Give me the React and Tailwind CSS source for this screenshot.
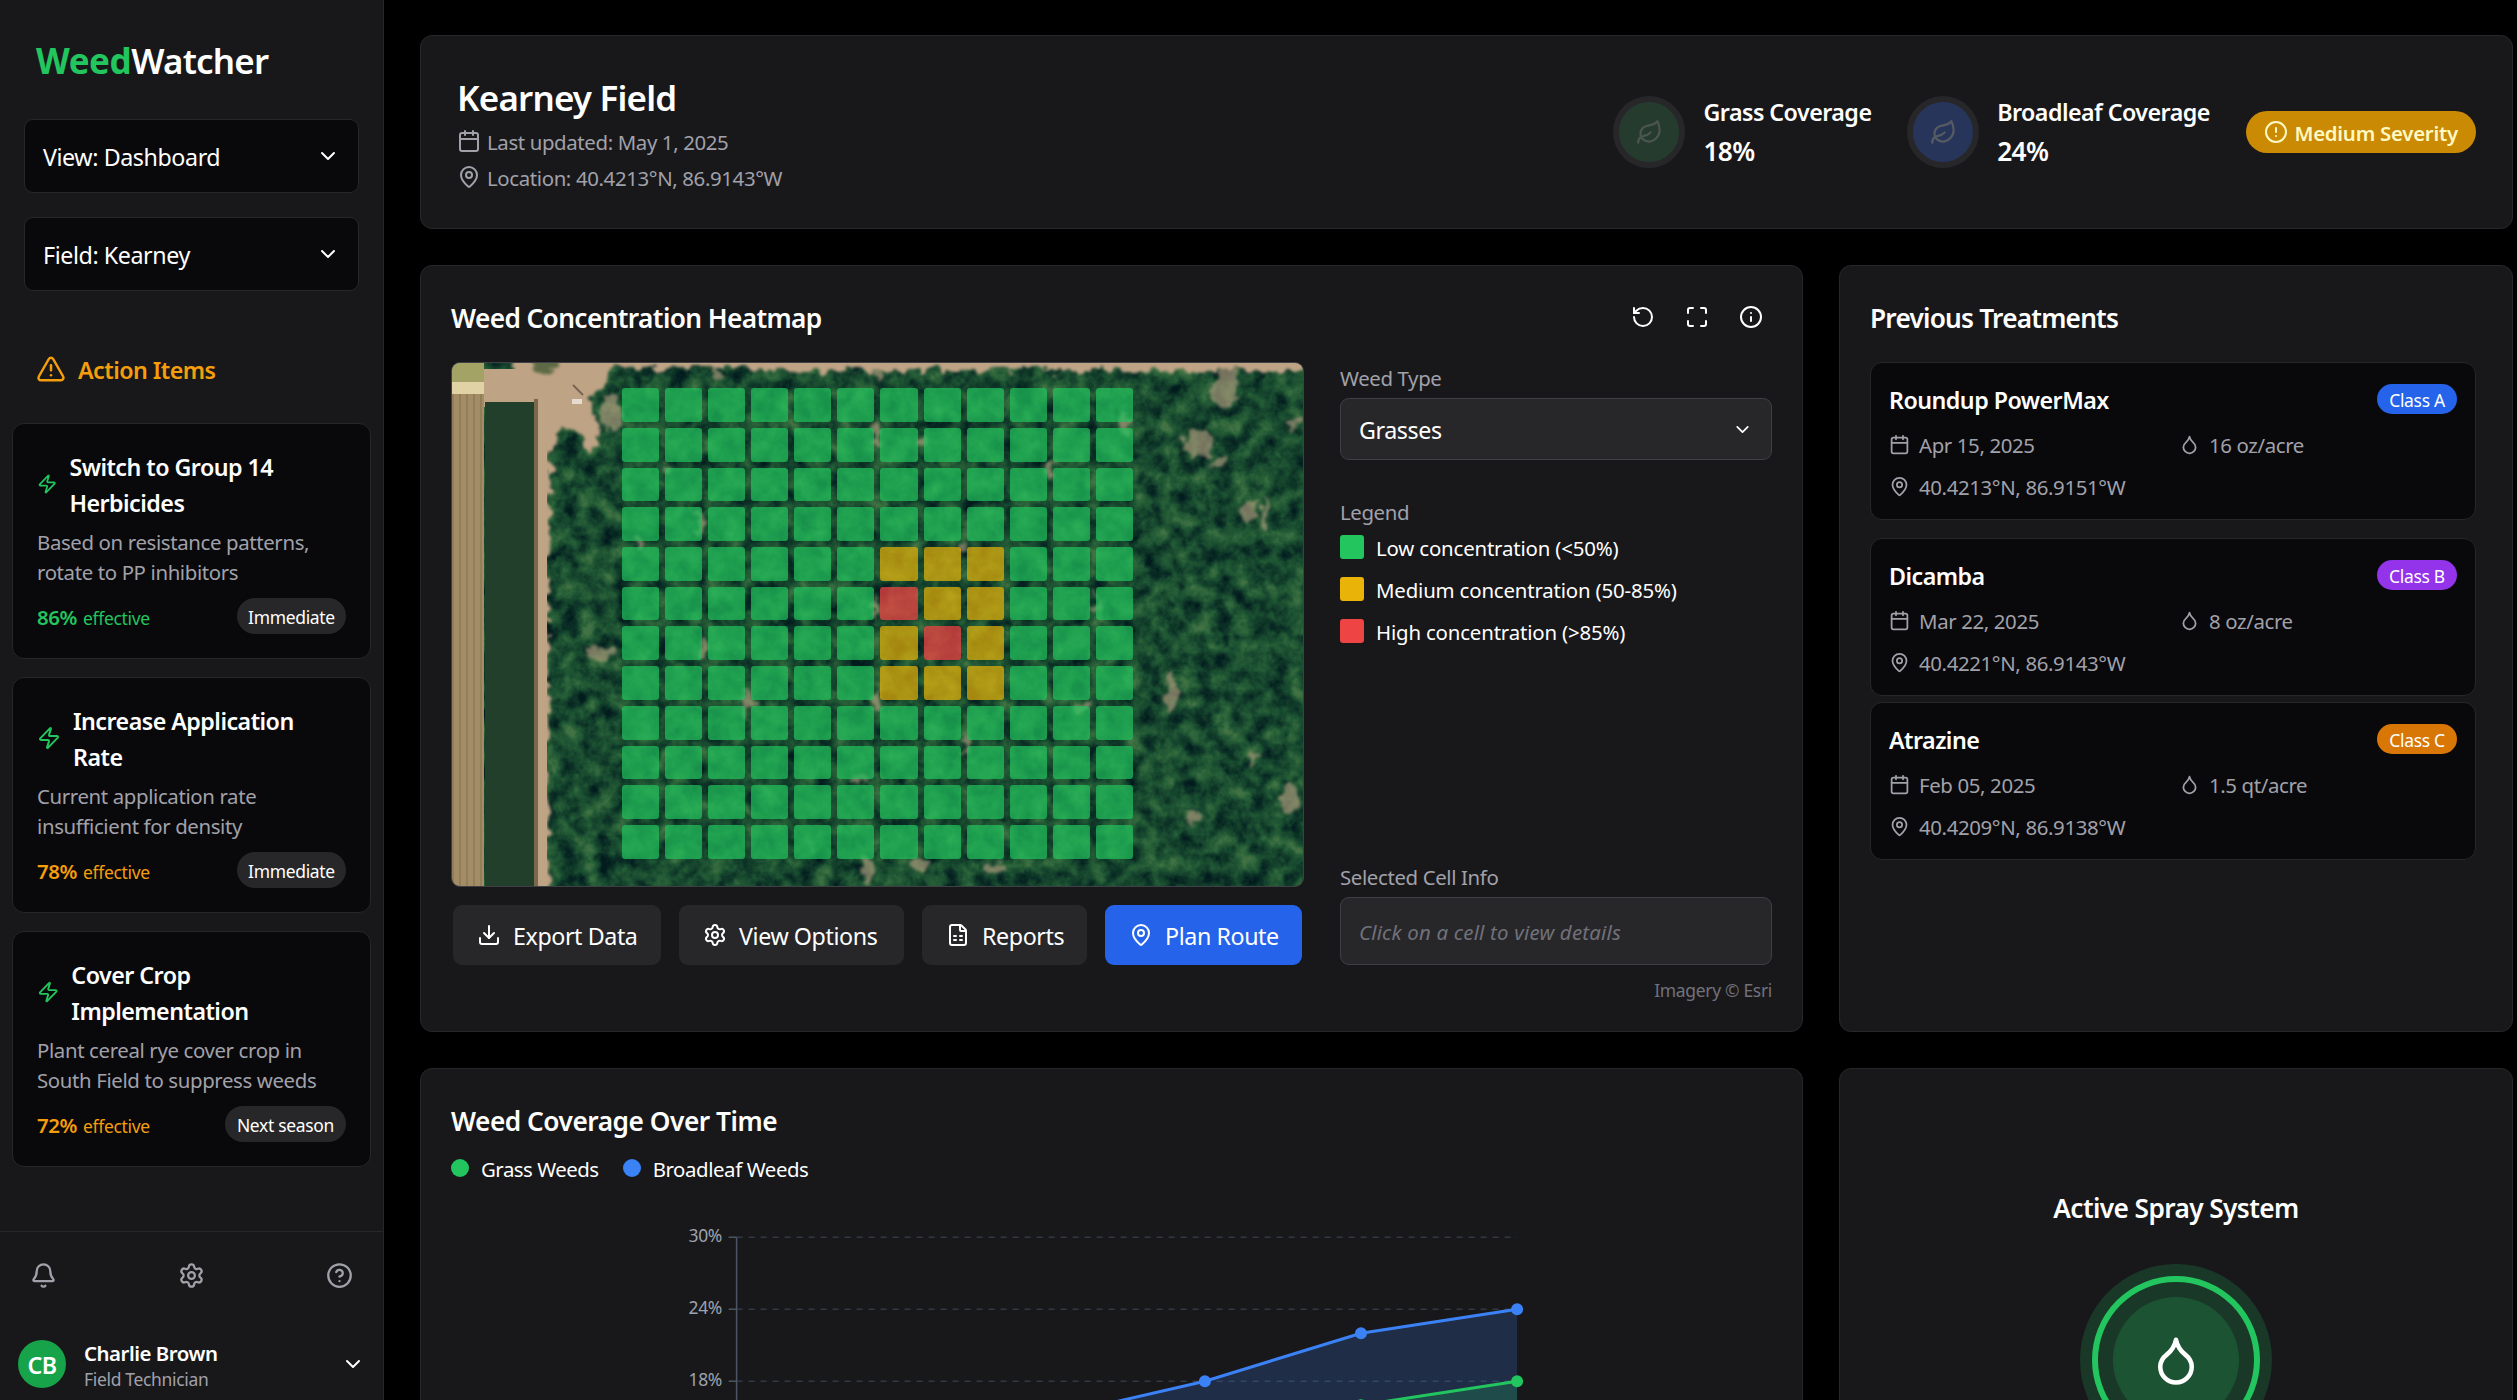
import React from "react";
import {
  Bell,
  Calendar,
  ChevronDown,
  CircleAlert,
  CircleHelp,
  Download,
  Droplet,
  FileSpreadsheet,
  Info,
  Leaf,
  MapPin,
  Maximize,
  RotateCcw,
  Settings,
  TriangleAlert,
  Zap,
} from "lucide-react";

const actionItems = [
  { title: ["Switch to Group 14", "Herbicides"], text: ["Based on resistance patterns,", "rotate to PP inhibitors"], pct: "86%", tone: "text-[#22c55e]", tag: "Immediate", tagWidth: "w-[72.7px]", icon: "w-[13.6px]" },
  { title: ["Increase Application", "Rate"], text: ["Current application rate", "insufficient for density"], pct: "78%", tone: "text-[#f59e0b]", tag: "Immediate", tagWidth: "w-[72.7px]", icon: "w-[16px]" },
  { title: ["Cover Crop", "Implementation"], text: ["Plant cereal rye cover crop in", "South Field to suppress weeds"], pct: "72%", tone: "text-[#f59e0b]", tag: "Next season", tagWidth: "w-[80.7px]", icon: "w-[14.9px]" },
];

const treatments = [
  { name: "Roundup PowerMax", cls: "Class A", color: "bg-[#2563eb]", date: "Apr 15, 2025", rate: "16 oz/acre", place: "40.4213°N, 86.9151°W", gap: "" },
  { name: "Dicamba", cls: "Class B", color: "bg-[#9333ea]", date: "Mar 22, 2025", rate: "8 oz/acre", place: "40.4221°N, 86.9143°W", gap: "mt-3" },
  { name: "Atrazine", cls: "Class C", color: "bg-[#d97706]", date: "Feb 05, 2025", rate: "1.5 qt/acre", place: "40.4209°N, 86.9138°W", gap: "mt-1" },
];

const legend = [
  ["bg-[#22c55e]", "Low concentration (<50%)"],
  ["bg-[#eab308]", "Medium concentration (50-85%)"],
  ["bg-[#ef4444]", "High concentration (>85%)"],
];

const heat = [
  "............",
  "............",
  "............",
  "............",
  "......mmm...",
  "......hmm...",
  "......mhm...",
  "......mmm...",
  "............",
  "............",
  "............",
  "............",
];

const cellColor = { ".": "bg-[#22c55e]/70", m: "bg-[#eab308]/70", h: "bg-[#ef4444]/75" };

// Text run, nudged down slightly so that capitals sit centred beside icons.
function T({ children, className = "", shift = "translate-y-[0.4px]" }) {
  return <span className={`inline-block ${shift} ${className}`}>{children}</span>;
}

function Select({ label }) {
  return (
    <div className="flex items-center justify-between rounded-md border border-[#27272a] bg-[#09090b] px-3 py-3 text-base">
      <T>{label}</T>
      <ChevronDown size={16} />
    </div>
  );
}

function ActionCard({ item }) {
  return (
    <div className="rounded-lg border border-[#27272a] bg-[#09090b] p-4">
      <div className="flex items-center gap-2">
        <Zap className={`h-4 shrink-0 text-[#22c55e] ${item.icon}`} />
        <div className="flex flex-col text-base font-semibold whitespace-nowrap">
          <T>{item.title[0]}</T>
          <T>{item.title[1]}</T>
        </div>
      </div>
      <div className="mt-1 flex flex-col text-sm whitespace-nowrap text-[#a1a1aa]">
        <T>{item.text[0]}</T>
        <T>{item.text[1]}</T>
      </div>
      <div className="mt-2 flex items-center justify-between">
        <div className={`flex items-baseline gap-1 ${item.tone}`}>
          <T className="text-sm font-semibold">{item.pct}</T>
          <T className="text-xs">effective</T>
        </div>
        <div className={`rounded-full bg-[#27272a] py-1 text-center text-xs ${item.tagWidth}`}>
          <T className="block">{item.tag}</T>
        </div>
      </div>
    </div>
  );
}

function Sidebar() {
  return (
    <aside className="flex h-full w-64 shrink-0 flex-col border-r border-[#27272a] bg-[#18181b]">
      <div className="flex p-6 text-2xl font-semibold">
        <T shift="translate-y-px" className="font-bold tracking-[-0.012em]! text-[#22c55e]">Weed</T>
        <T shift="translate-y-px">Watcher</T>
      </div>
      <div className="flex flex-col gap-4 px-4">
        <Select label="View: Dashboard" />
        <Select label="Field: Kearney" />
      </div>
      <div className="mt-10 flex items-center gap-2 px-6 text-base font-semibold text-[#f59e0b]">
        <TriangleAlert size={20} />
        <T>Action Items</T>
      </div>
      <div className="mt-6 flex flex-col gap-3 px-2">
        {actionItems.map((item) => (
          <ActionCard key={item.title[0]} item={item} />
        ))}
      </div>
      <div className="mt-auto border-t border-[#27272a]">
        <div className="flex justify-between p-4 text-[#a1a1aa]">
          <div className="p-1"><Bell size={18} /></div>
          <div className="p-1"><Settings size={18} /></div>
          <div className="p-1"><CircleHelp size={18} /></div>
        </div>
        <div className="flex h-[60px] items-center px-3">
          <div className="flex h-8 w-8 items-center justify-center rounded-full bg-[#16a34a] text-base font-semibold">
            <T>CB</T>
          </div>
          <div className="ml-3 flex flex-col">
            <div className="flex text-sm font-semibold"><T>Charlie Brown</T></div>
            <div className="flex text-xs text-[#a1a1aa]"><T shift="translate-y-0">Field Technician</T></div>
          </div>
          <ChevronDown size={16} className="ml-auto" />
        </div>
      </div>
    </aside>
  );
}

function Coverage({ label, value, fill, icon, width }) {
  return (
    <div className="flex items-center gap-3">
      <div className={`flex h-12 w-12 items-center justify-center rounded-full border-4 border-[#27272a] ${fill}`}>
        <Leaf size={18} className={icon} />
      </div>
      <div className={`whitespace-nowrap ${width}`}>
        <div className="flex text-base font-semibold"><T>{label}</T></div>
        <div className="flex text-lg font-semibold"><T>{value}</T></div>
      </div>
    </div>
  );
}

function Header() {
  return (
    <div className="flex items-center justify-between rounded-lg border border-[#27272a] bg-[#18181b] p-6">
      <div>
        <div className="flex text-2xl font-semibold"><T shift="translate-y-px">Kearney Field</T></div>
        <div className="mt-1 flex items-center gap-1 text-sm text-[#a1a1aa]">
          <Calendar size={16} />
          <T>Last updated: May 1, 2025</T>
        </div>
        <div className="mt-1 flex items-center gap-1 text-sm text-[#a1a1aa]">
          <MapPin size={16} />
          <T>Location: 40.4213°N, 86.9143°W</T>
        </div>
      </div>
      <div className="flex items-center gap-6">
        <Coverage label="Grass Coverage" value="18%" fill="bg-[#253b2e]" icon="text-[#4b5450]" width="w-[111.8px]" />
        <Coverage label="Broadleaf Coverage" value="24%" fill="bg-[#27355a]" icon="text-[#555a63]" width="w-[142.2px]" />
        <div className="flex h-7 w-[153px] items-center gap-1 rounded-full bg-[#ca8a04] pl-3 text-sm font-semibold whitespace-nowrap text-[#fef9c3]">
          <CircleAlert size={16} />
          <T className="tracking-[-0.012em]!">Medium Severity</T>
        </div>
      </div>
    </div>
  );
}

const clearings = [
  [747, 80, 15, 13], [766, 100, 8, 7], [797, 148, 7, 13], [719, 332, 7, 20], [741, 452, 8, 7], [838, 436, 10, 14],
  [774, 25, 13, 20], [812, 150, 3, 18], [672, 62, 5, 13], [842, 60, 8, 5], [150, 290, 15, 6], [160, 50, 10, 20],
  [248, 160, 3, 16], [252, 285, 3, 10], [424, 70, 4, 12], [424, 245, 3, 12], [424, 335, 3, 12], [296, 340, 4, 15],
  [513, 380, 3, 12], [630, 345, 8, 6], [600, 105, 3, 10], [410, 415, 7, 5], [416, 508, 7, 12], [468, 500, 11, 5],
  [540, 505, 11, 5], [215, 105, 4, 5], [188, 180, 7, 5], [645, 240, 3, 10], [510, 185, 5, 4], [800, 395, 7, 5], [470, 78, 5, 5],
  [425, 10, 4, 10], [265, 8, 4, 10],
];

function Satellite() {
  return (
    <svg className="block h-full w-full" viewBox="0 0 851 523" preserveAspectRatio="none">
      <defs>
        <filter id="canopy" x="0" y="0" width="100%" height="100%" colorInterpolationFilters="sRGB">
          <feTurbulence type="fractalNoise" baseFrequency="0.055" numOctaves="4" seed="8" />
          <feColorMatrix type="matrix" values="1.2 0.9 0 0 -0.56  1.2 0.9 0 0 -0.56  1.2 0.9 0 0 -0.56  0 0 0 0 1" />
          <feComponentTransfer>
            <feFuncR type="table" tableValues="0.01 0.05 0.1 0.16 0.26" />
            <feFuncG type="table" tableValues="0.11 0.2 0.3 0.38 0.45" />
            <feFuncB type="table" tableValues="0.12 0.15 0.19 0.22 0.27" />
          </feComponentTransfer>
        </filter>
        <filter id="rough" x="-20%" y="-20%" width="140%" height="140%">
          <feTurbulence type="fractalNoise" baseFrequency="0.09" numOctaves="2" seed="3" result="n" />
          <feDisplacementMap in="SourceGraphic" in2="n" scale="18" xChannelSelector="R" yChannelSelector="G" />
          <feGaussianBlur stdDeviation="1.8" />
        </filter>
        <pattern id="furrows" width="7" height="8" patternUnits="userSpaceOnUse">
          <rect width="7" height="8" fill="#a38c66" />
          <rect width="2" height="8" fill="#937e5a" />
        </pattern>
      </defs>
      <rect width="851" height="523" fill="#1c4a31" filter="url(#canopy)" />
      <g filter="url(#rough)" fill="#bfa385">
        <path d="M-20 -20H880V8H330L300 6H160L150 24L135 38L150 68L142 92L126 70L108 64L99 90L97 150L97 300L95 420L97 560H60V-20Z" />
        <g opacity="0.6">
          {clearings.map(([cx, cy, rx, ry]) => (
            <ellipse key={`${cx}-${cy}`} cx={cx} cy={cy} rx={rx} ry={ry} />
          ))}
        </g>
      </g>
      <rect x="30" y="6" width="56" height="38" fill="#bfa385" />
      <path d="M78 -6H110L102 10L90 12Z" fill="#5d6b45" filter="url(#rough)" />
      <rect x="33" y="39" width="51" height="484" fill="#213f2a" />
      <rect x="82" y="36" width="4" height="487" fill="#7a684c" />
      <rect x="86" y="44" width="9" height="479" fill="#bfa385" />
      <rect width="32" height="523" fill="url(#furrows)" />
      <rect width="32" height="22" fill="#a3a366" />
      <rect y="19" width="32" height="12" fill="#e0d2a4" />
      <rect x="120" y="36" width="10" height="5" fill="#efe9e0" opacity="0.8" />
      <path d="M121 22l10 10" stroke="#5a4a3e" strokeWidth="2" opacity="0.7" />
    </svg>
  );
}

function ToolButton({ icon: Icon, label, className }) {
  return (
    <div className={`flex h-10 items-center gap-2 rounded-md pl-4 text-base whitespace-nowrap ${className}`}>
      <Icon size={16} className="shrink-0" />
      <T>{label}</T>
    </div>
  );
}

function Heatmap() {
  return (
    <div className="w-[922px] shrink-0 rounded-lg border border-[#27272a] bg-[#18181b] p-5">
      <div className="flex items-center justify-between">
        <div className="flex text-lg font-semibold"><T>Weed Concentration Heatmap</T></div>
        <div className="flex gap-2">
          <div className="p-1.5"><RotateCcw size={16} /></div>
          <div className="p-1.5"><Maximize size={16} /></div>
          <div className="p-1.5"><Info size={16} /></div>
        </div>
      </div>
      <div className="mt-4 flex h-[426px] gap-6">
        <div className="flex-1">
          <div className="relative h-[350px] overflow-hidden rounded-md border border-[#3f3f46]">
            <Satellite />
            <div className="absolute inset-x-[20%] top-[4.8%] bottom-[5.2%] grid grid-cols-12 grid-rows-12 gap-x-1 gap-y-1">
              {heat.join("").split("").map((c, i) => (
                <div key={i} className={`rounded-xs ${cellColor[c]}`} />
              ))}
            </div>
          </div>
          <div className="mt-3 flex justify-center gap-3">
            <ToolButton icon={Download} label="Export Data" className="w-[138.7px] bg-[#27272a]" />
            <ToolButton icon={Settings} label="View Options" className="w-[150px] bg-[#27272a]" />
            <ToolButton icon={FileSpreadsheet} label="Reports" className="w-[110px] bg-[#27272a]" />
            <ToolButton icon={MapPin} label="Plan Route" className="w-[131.3px] bg-[#2563eb]" />
          </div>
        </div>
        <div className="flex w-[288px] flex-col">
          <div className="flex text-sm text-[#a1a1aa]"><T>Weed Type</T></div>
          <div className="mt-1 flex items-center justify-between rounded-md border border-[#3f3f46] bg-[#27272a] px-3 py-2 text-base">
            <T>Grasses</T>
            <ChevronDown size={14} />
          </div>
          <div className="mt-6 flex text-sm text-[#a1a1aa]"><T>Legend</T></div>
          <div className="mt-1 flex flex-col gap-2">
            {legend.map(([color, label]) => (
              <div key={label} className="flex items-center gap-2 text-sm">
                <div className={`h-4 w-4 rounded-xs ${color}`} />
                <T className="tracking-[-0.008em]!">{label}</T>
              </div>
            ))}
          </div>
          <div className="mt-auto flex text-sm text-[#a1a1aa]"><T>Selected Cell Info</T></div>
          <div className="mt-1 flex rounded-md border border-[#3f3f46] bg-[#27272a] p-3 text-sm text-[#71717a] italic">
            <T className="tracking-[0.01em]!">Click on a cell to view details</T>
          </div>
          <div className="mt-2 flex justify-end text-xs text-[#71717a]"><T>Imagery © Esri</T></div>
        </div>
      </div>
    </div>
  );
}

function Treatments() {
  return (
    <div className="flex-1 rounded-lg border border-[#27272a] bg-[#18181b] p-5">
      <div className="flex text-lg font-semibold"><T className="tracking-[-0.03em]!">Previous Treatments</T></div>
      <div className="mt-4 pr-1">
        {treatments.map((t) => (
          <div key={t.name} className={`rounded-lg border border-[#27272a] bg-[#09090b] p-3 ${t.gap}`}>
            <div className="flex items-center justify-between">
              <div className="flex text-base font-semibold"><T>{t.name}</T></div>
              <div className={`w-[53.3px] rounded-full py-0.5 text-center text-xs ${t.color}`}>
                <T className="block">{t.cls}</T>
              </div>
            </div>
            <div className="mt-2 grid grid-cols-2 gap-2 text-sm text-[#a1a1aa]">
              <div className="flex items-center gap-1.5">
                <Calendar size={14} />
                <T>{t.date}</T>
              </div>
              <div className="flex items-center gap-1.5">
                <Droplet size={14} />
                <T>{t.rate}</T>
              </div>
              <div className="flex items-center gap-1.5">
                <MapPin size={14} />
                <T>{t.place}</T>
              </div>
            </div>
          </div>
        ))}
      </div>
    </div>
  );
}

const step = 156.1;
const x0 = 285.6;
const yOf = (pct) => 54.2 + (30 - pct) * 12;
const broadleaf = [5, 9, 15, 18, 22, 24];
const grass = [3, 6, 9, 12, 16, 18];
const points = (data) => data.map((v, i) => `${x0 + i * step},${yOf(v)}`).join(" ");

function Series({ data, color }) {
  return (
    <g>
      <polygon points={`${points(data)} ${x0 + 5 * step},${yOf(0)} ${x0},${yOf(0)}`} fill={color} fillOpacity="0.2" />
      <polyline points={points(data)} fill="none" stroke={color} strokeWidth="3" />
      {data.map((v, i) => (
        <circle key={i} cx={x0 + i * step} cy={yOf(v)} r="6" fill={color} />
      ))}
    </g>
  );
}

function Chart() {
  return (
    <svg className="block h-[240px] w-full" viewBox="0 0 1321 360" preserveAspectRatio="xMinYMin slice">
      {[30, 24, 18].map((v) => (
        <g key={v}>
          <line x1={x0} x2={x0 + 5 * step} y1={yOf(v)} y2={yOf(v)} stroke="#374151" strokeOpacity="0.8" strokeWidth="1.5" strokeDasharray="6 6" />
          <line x1={x0 - 8} x2={x0} y1={yOf(v)} y2={yOf(v)} stroke="#4b5563" strokeWidth="1.5" />
          <text x="271" y={yOf(v) + 5} textAnchor="end" fill="#9ca3af" className="text-[17.46px]">{v}%</text>
        </g>
      ))}
      <line x1={x0} x2={x0} y1={yOf(30)} y2={yOf(0)} stroke="#4b5563" strokeWidth="1.5" />
      <Series data={broadleaf} color="#3b82f6" />
      <Series data={grass} color="#22c55e" />
    </svg>
  );
}

function CoverageChart() {
  return (
    <div className="w-[922px] shrink-0 overflow-hidden rounded-lg border border-[#27272a] bg-[#18181b] p-5">
      <div className="flex text-lg font-semibold"><T className="tracking-[-0.018em]!">Weed Coverage Over Time</T></div>
      <div className="mt-2 flex gap-4 text-sm">
        <div className="flex items-center gap-2">
          <div className="h-3 w-3 rounded-full bg-[#22c55e]" />
          <T className="tracking-[-0.024em]!">Grass Weeds</T>
        </div>
        <div className="flex items-center gap-2">
          <div className="h-3 w-3 rounded-full bg-[#3b82f6]" />
          <T className="tracking-[-0.02em]!">Broadleaf Weeds</T>
        </div>
      </div>
      <Chart />
    </div>
  );
}

function SpraySystem() {
  return (
    <div className="flex flex-1 flex-col items-center rounded-lg border border-[#27272a] bg-[#18181b] pt-[78px]">
      <div className="flex text-lg font-semibold"><T>Active Spray System</T></div>
      <div className="mt-6 flex h-32 w-32 shrink-0 items-center justify-center rounded-full bg-[#1a3828]">
        <div className="flex h-28 w-28 items-center justify-center rounded-full border-4 border-[#22c55e]">
          <div className="flex h-[84px] w-[84px] items-center justify-center rounded-full bg-[#1c5433]">
            <Droplet size={36} />
          </div>
        </div>
      </div>
    </div>
  );
}

export default function App() {
  return (
    <div className="h-[1400px] w-[2517px] overflow-hidden bg-black">
      <div className="-mt-px w-[2517px]">
        <div className="flex h-[940px] font-['Noto_Sans','Open_Sans',sans-serif] text-white [zoom:1.5] [--text-2xl--line-height:32px] [--text-2xl:23.3px] [--text-base--line-height:24px] [--text-base:15.5px] [--text-lg--line-height:28px] [--text-lg:17.5px] [--text-sm--line-height:20px] [--text-sm:13.6px] [--text-xs--line-height:16px] [--text-xs:11.65px] **:tracking-[-0.018em] [&_.font-semibold_*]:tracking-[-0.023em]">
          <Sidebar />
          <main className="w-[1443.3px] shrink-0 p-6 pb-0">
            <Header />
            <div className="mt-6 flex gap-6">
              <Heatmap />
              <Treatments />
            </div>
            <div className="mt-6 flex h-[360px] gap-6">
              <CoverageChart />
              <SpraySystem />
            </div>
          </main>
        </div>
      </div>
    </div>
  );
}
